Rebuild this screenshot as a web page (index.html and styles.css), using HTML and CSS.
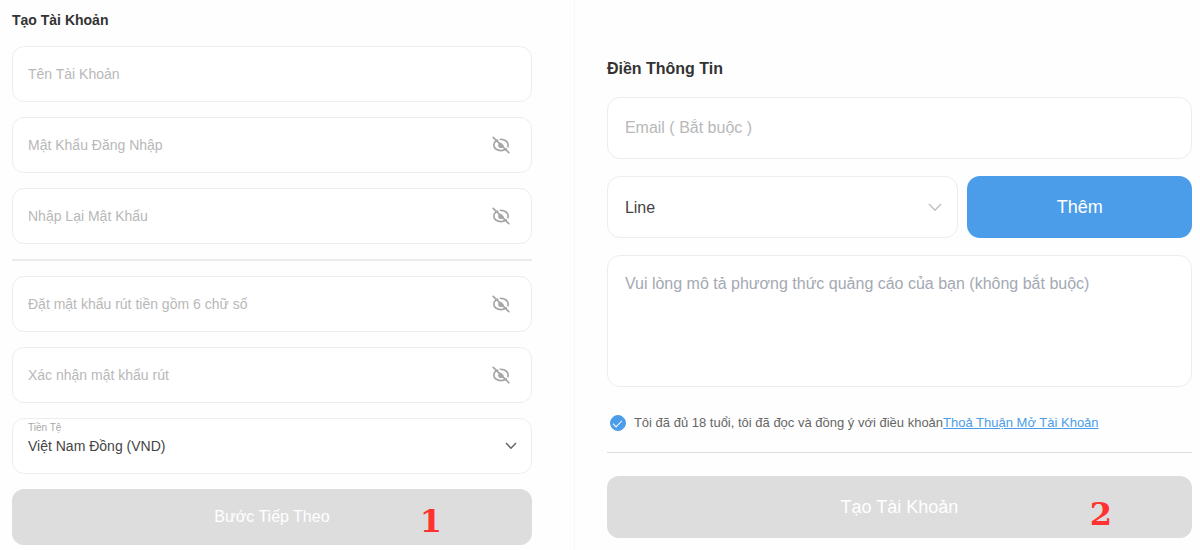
FILE: index.html
```
<!DOCTYPE html>
<html lang="vi">
<head>
    <meta charset="UTF-8">
    <title>Tạo Tài Khoản</title>
    <link rel="stylesheet" href="styles.css">
</head>
<body>
    <svg class="sprite" aria-hidden="true">
        <symbol id="eye-off" viewBox="0 0 18 18">
            <ellipse cx="9" cy="9" rx="7.2" ry="5.6" fill="none" stroke="currentColor" stroke-width="1.7"/>
            <circle cx="9" cy="9.2" r="2.8" fill="currentColor"/>
            <path d="M3 -0.2L18.4 15" stroke="#fff" stroke-width="1.4"/>
            <path d="M1.2 1.4L16.8 16.6" stroke="currentColor" stroke-width="1.7" stroke-linecap="round"/>
        </symbol>
    </svg>

    <div class="page">
        <form class="step step-account">
            <h2>Tạo Tài Khoản</h2>
            <div class="field">
                <input type="text" id="username" placeholder="Tên Tài Khoản" aria-label="Tên Tài Khoản">
            </div>
            <div class="field">
                <input type="password" id="password" placeholder="Mật Khẩu Đăng Nhập" aria-label="Mật Khẩu Đăng Nhập">
                <button type="button" class="eye" aria-label="Mật khẩu"><svg><use href="#eye-off"/></svg></button>
            </div>
            <div class="field">
                <input type="password" id="password-confirm" placeholder="Nhập Lại Mật Khẩu" aria-label="Nhập Lại Mật Khẩu">
                <button type="button" class="eye" aria-label="Mật khẩu"><svg><use href="#eye-off"/></svg></button>
            </div>
            <hr>
            <div class="field">
                <input type="password" id="pin" placeholder="Đặt mật khẩu rút tiền gồm 6 chữ số" aria-label="Đặt mật khẩu rút tiền gồm 6 chữ số">
                <button type="button" class="eye" aria-label="Mật khẩu"><svg><use href="#eye-off"/></svg></button>
            </div>
            <div class="field">
                <input type="password" id="pin-confirm" placeholder="Xác nhận mật khẩu rút" aria-label="Xác nhận mật khẩu rút">
                <button type="button" class="eye" aria-label="Mật khẩu"><svg><use href="#eye-off"/></svg></button>
            </div>
            <div class="field select-field">
                <label class="float-label" for="currency">Tiền Tệ</label>
                <select id="currency">
                    <option>Việt Nam Đồng (VND)</option>
                </select>
                <svg class="chevron" viewBox="0 0 12 8"><path d="M1 1L6 6.2L11 1"/></svg>
            </div>
            <div class="submit">
                <button type="button" class="submit-button">Bước Tiếp Theo</button>
                <span class="step-number">1</span>
            </div>
        </form>

        <form class="step step-info">
            <h2>Điền Thông Tin</h2>
            <div class="field">
                <input type="email" id="email" placeholder="Email ( Bắt buộc )" aria-label="Email">
            </div>
            <div class="contact">
                <div class="field select-field">
                    <select id="contact-type" aria-label="Line">
                        <option>Line</option>
                    </select>
                    <svg class="chevron" viewBox="0 0 14 9"><path d="M1 1L7 7.2L13 1"/></svg>
                </div>
                <button type="button" class="add-button">Thêm</button>
            </div>
            <textarea id="description" placeholder="Vui lòng mô tả phương thức quảng cáo của bạn (không bắt buộc)" aria-label="Mô tả"></textarea>
            <div class="terms">
                <input type="checkbox" id="agree" checked>
                <div><label for="agree">Tôi đã đủ 18 tuổi, tôi đã đọc và đồng ý với điều khoản</label><a href="#">Thoả Thuận Mở Tài Khoản</a></div>
            </div>
            <hr>
            <div class="submit">
                <button type="button" class="submit-button">Tạo Tài Khoản</button>
                <span class="step-number">2</span>
            </div>
        </form>
    </div>
</body>
</html>
```
FILE: styles.css
```
* {
    box-sizing: border-box;
}

body {
    margin: 0;
    background-color: #fefefe;
    color: #444;
    font-family: "Liberation Sans", Arial, sans-serif;
}

.sprite {
    display: none;
}

.page {
    display: grid;
    grid-template-columns: 11fr 12fr;
    min-height: 100vh;
}

.step {
    display: flex;
    flex-direction: column;
    min-width: 0;
}

.step-account {
    gap: 15px;
    padding: 10px 42px 5px 12px;
    font-size: 14px;
}

.step-info {
    gap: 17px;
    padding: 58px 8px 12px 32px;
    border-left: 1px solid #f8f8f8;
    font-size: 16px;
}

h2 {
    margin: 0;
    color: #333;
    font-size: 14px;
    line-height: 21px;
}

.step-info h2 {
    font-size: 16px;
    line-height: 22px;
}

input,
select,
textarea,
button {
    font: inherit;
}

.field {
    position: relative;
    display: flex;
    align-items: center;
    height: 56px;
    border: 1px solid #ededed;
    border-radius: 12px;
    background-color: #fff;
}

.step-info .field {
    height: 62px;
    border-radius: 13px;
}

.field input,
.field select {
    flex: 1;
    min-width: 0;
    height: 100%;
    margin: 0;
    padding: 0 15px;
    border: none;
    border-radius: 12px;
    outline: none;
    background: transparent;
    color: #444;
    appearance: none;
}

.step-info .field input,
.step-info .field select {
    padding: 0 17px;
}

::placeholder {
    color: #b8b8b8;
    opacity: 1;
}

.eye {
    margin-right: 21px;
    padding: 0;
    border: none;
    background: none;
    color: #a6a6a6;
    cursor: pointer;
}

.eye svg {
    display: block;
    width: 18px;
    height: 18px;
}

.float-label {
    position: absolute;
    top: 2px;
    left: 15px;
    color: #a8a8a8;
    font-size: 10px;
    line-height: 14px;
}

.chevron {
    position: absolute;
    right: 14px;
    width: 12px;
    height: 8px;
    fill: none;
    stroke: #666;
    stroke-width: 1.5;
    pointer-events: none;
}

.step-info .chevron {
    right: 15px;
    width: 14px;
    height: 9px;
    stroke: #c0c0c0;
}

hr {
    width: 100%;
    height: 2px;
    margin: 0;
    border: none;
    background-color: #ebebeb;
}

.step-info hr {
    height: 1px;
    margin-bottom: 6px;
    background-color: #dcdcdc;
}

.submit {
    position: relative;
    display: flex;
}

.submit-button {
    flex: 1;
    height: 56px;
    padding: 0;
    border: none;
    border-radius: 12px;
    background-color: #ddd;
    color: #fff;
    font-size: 16px;
}

.step-info .submit-button {
    height: 62px;
    font-size: 18px;
}

.step-number {
    position: absolute;
    right: 90px;
    bottom: 4px;
    color: #ff3131;
    font: bold 32px/40px "DejaVu Serif", serif;
}

.step-info .step-number {
    right: 80px;
}

.contact {
    display: flex;
    gap: 9px;
}

.contact .field {
    flex: 14;
}

.add-button {
    flex: 9;
    padding: 0;
    border: none;
    border-radius: 13px;
    background-color: #4b9dea;
    color: #fff;
    font-size: 18px;
    cursor: pointer;
}

textarea {
    display: block;
    width: 100%;
    height: 132px;
    padding: 18px 17px;
    border: 1px solid #ededed;
    border-radius: 13px;
    outline: none;
    background-color: #fff;
    color: #444;
    line-height: 20px;
    resize: none;
}

textarea::placeholder {
    color: #a4a9b3;
}

.terms {
    display: flex;
    align-items: center;
    gap: 8px;
    padding: 9px 3px 2px;
    color: #666;
    font-size: 13px;
    line-height: 20px;
}

.terms input {
    display: grid;
    place-items: center;
    width: 16px;
    height: 16px;
    margin: 0;
    border: 1px solid #4b9dea;
    border-radius: 50%;
    appearance: none;
}

.terms input:checked {
    background-color: #4b9dea;
}

.terms input:checked::before {
    content: "";
    width: 8px;
    height: 4px;
    border: solid #fff;
    border-width: 0 0 1px 1px;
    transform: translateY(-1px) rotate(-45deg);
}

.terms a {
    color: #4b9dea;
}
```
